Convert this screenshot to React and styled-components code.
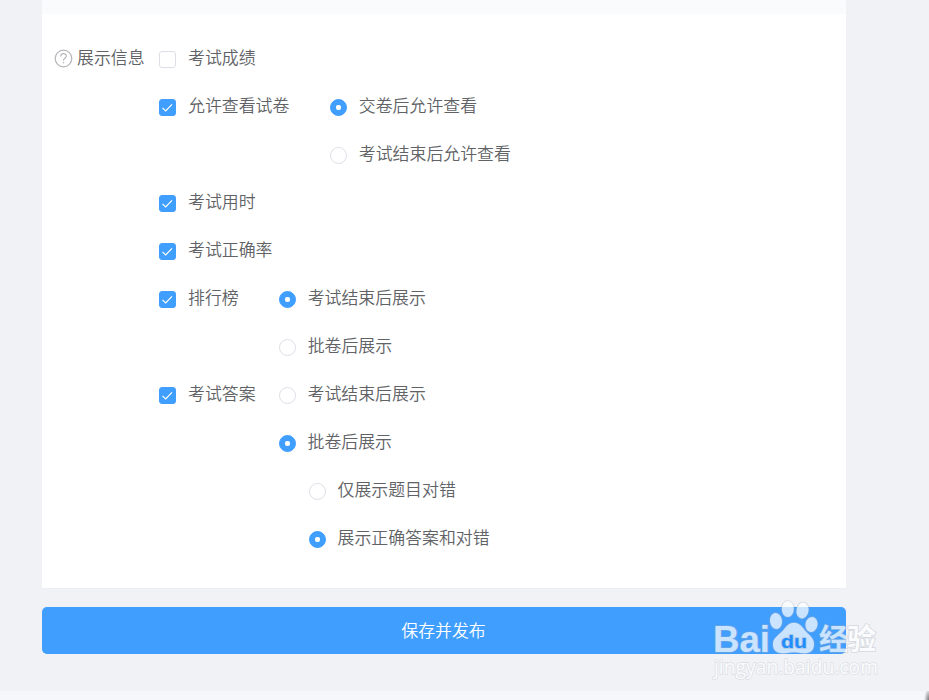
import React from 'react';
import styled, { createGlobalStyle, css } from 'styled-components';

const GlobalStyle = createGlobalStyle`
  * {
    box-sizing: border-box;
  }

  body {
    background: #f0f2f6;
    color: #606266;
    font-family: 'Noto Sans CJK SC', sans-serif;
    font-size: 16.9px;
    font-weight: 350;
    margin: 0;
    overflow: hidden;
  }
`;

const StyledPage = styled.div`
  display: flex;
  flex-direction: column;
  height: 700px;
  overflow: hidden;
  position: relative;
`;

const StyledCard = styled.section`
  background: #fff;
  border-bottom: 1px solid #ebeef5;
  height: 589px;
  margin: 0 83px 0 42px;
`;

const StyledCardHeader = styled.div`
  background: #f9fbfd;
  height: 14px;
`;

const StyledFormItem = styled.div`
  display: flex;
  padding: 20px 0 0 12px;
`;

const StyledLabel = styled.div`
  align-items: center;
  display: flex;
  gap: 4px;
  height: 48px;
  width: 105px;
`;

const StyledGroup = styled.div`
  display: flex;
  gap: ${props => props.$gap || 0}px;
`;

const StyledOption = styled.label`
  align-items: center;
  display: flex;
  gap: 12px;
  height: 48px;
  padding-left: ${props => (props.$nested ? 30 : 0)}px;
`;

const StyledText = styled.span`
  line-height: 24px;
  padding-bottom: 2px;
  white-space: nowrap;
`;

const controlStyle = css`
  align-items: center;
  background: ${props => (props.$checked ? '#409eff' : '#fff')};
  border: 1px solid ${props => (props.$checked ? '#409eff' : '#dcdfe6')};
  display: flex;
  flex: none;
  height: 17px;
  justify-content: center;
  margin-top: 3px;
  width: 17px;
`;

const StyledCheckbox = styled.span`
  ${controlStyle}
  border-radius: 3px;
`;

const StyledRadio = styled.span`
  ${controlStyle}
  border-radius: 50%;
`;

const StyledDot = styled.span`
  background: #fff;
  border-radius: 2px;
  height: 5px;
  width: 5px;
`;

const StyledButton = styled.button`
  background: #409eff;
  border: 0;
  border-radius: 5px;
  color: #fff;
  flex: none;
  font: inherit;
  height: 47px;
  margin: 18px 83px 0 42px;
  padding: 0 1px 2px 0;
`;

const StyledFooter = styled.footer`
  background: radial-gradient(ellipse 5px 12px at 100% 100%, #777, transparent) #f5f7fb;
  height: 9px;
  margin-top: auto;
`;

const StyledWatermark = styled.svg`
  left: 706px;
  position: absolute;
  top: 596px;
`;

const groups = [
  { text: '考试成绩' },
  {
    text: '允许查看试卷',
    checked: true,
    gap: 40.5,
    options: [
      { text: '交卷后允许查看', checked: true },
      { text: '考试结束后允许查看' }
    ]
  },
  { text: '考试用时', checked: true },
  { text: '考试正确率', checked: true },
  {
    text: '排行榜',
    checked: true,
    gap: 40,
    options: [
      { text: '考试结束后展示', checked: true },
      { text: '批卷后展示' }
    ]
  },
  {
    text: '考试答案',
    checked: true,
    gap: 23,
    options: [
      { text: '考试结束后展示' },
      { text: '批卷后展示', checked: true },
      { text: '仅展示题目对错', nested: true },
      { text: '展示正确答案和对错', nested: true, checked: true }
    ]
  }
];

const HelpIcon = () => (
  <svg width="19" height="19" viewBox="0 0 19 19" fill="none" stroke="#b4b6b9">
    <circle cx="9.5" cy="9.5" r="8.3" strokeWidth="1.2" />
    <path d="M6.7 7.5C6.7 3.8 12.3 3.9 12.3 7.1C12.3 9 9.5 9.2 9.5 11.7" strokeWidth="1.2" />
    <circle cx="9.5" cy="13.8" r=".8" fill="#b4b6b9" stroke="none" />
  </svg>
);

const Checkbox = ({ text, checked }) => (
  <StyledOption>
    <StyledCheckbox $checked={checked}>
      {checked && (
        <svg width="15" height="15" viewBox="0 0 15 15" fill="none" stroke="#fff">
          <path d="M2.5 7.8L5.7 11L12 4.3" strokeWidth="1.2" />
        </svg>
      )}
    </StyledCheckbox>
    <StyledText>{text}</StyledText>
  </StyledOption>
);

const Radio = ({ text, checked, nested }) => (
  <StyledOption $nested={nested}>
    <StyledRadio $checked={checked}>{checked && <StyledDot />}</StyledRadio>
    <StyledText>{text}</StyledText>
  </StyledOption>
);

const Watermark = () => (
  <StyledWatermark width="180" height="88" viewBox="0 0 180 88">
    <g
      fill="#fff"
      stroke="#aab0ba"
      strokeOpacity=".55"
      strokeWidth="1.6"
      paintOrder="stroke"
      opacity=".72"
      fontFamily="'Open Sans', sans-serif"
    >
      <text
        x="7"
        y="55.5"
        fontFamily="'Liberation Sans', sans-serif"
        fontSize="37"
        fontWeight="700"
        textLength="57"
        lengthAdjust="spacingAndGlyphs"
      >
        Bai
      </text>
      <ellipse cx="70" cy="25" rx="6" ry="8" transform="rotate(-8 70 25)" />
      <ellipse cx="81.8" cy="13" rx="6" ry="8" />
      <ellipse cx="96.5" cy="14.5" rx="6" ry="8" transform="rotate(10 96.5 14.5)" />
      <ellipse cx="105.5" cy="28.5" rx="6" ry="7.6" transform="rotate(10 105.5 28.5)" />
      <path d="M79 32C84 25 92 25 97 32C102 39 108 41 108 48C108 57 101 58 95 57C90 56 86 56 81 57C74 58 67 57 67 48C67 41 74 39 79 32Z" />
      <text
        x="75"
        y="52"
        fontFamily="'Liberation Sans', sans-serif"
        fontSize="19"
        fontWeight="700"
        fill="#1687ff"
        textLength="26"
        lengthAdjust="spacingAndGlyphs"
      >
        du
      </text>
      <text
        x="113"
        y="54"
        fontFamily="'Noto Sans CJK SC', sans-serif"
        fontSize="29"
        fontWeight="700"
        textLength="57"
      >
        经验
      </text>
      <text
        x="8"
        y="77.5"
        fontSize="19.5"
        fontWeight="500"
        strokeOpacity=".4"
        textLength="164"
        lengthAdjust="spacingAndGlyphs"
      >
        jingyan.baidu.com
      </text>
    </g>
  </StyledWatermark>
);

const App = () => (
  <>
    <GlobalStyle />
    <StyledPage>
      <StyledCard>
        <StyledCardHeader />
        <StyledFormItem>
          <StyledLabel>
            <HelpIcon />
            <StyledText>展示信息</StyledText>
          </StyledLabel>
          <div>
            {groups.map(({ text, checked, gap, options = [] }) => (
              <StyledGroup key={text} $gap={gap}>
                <Checkbox text={text} checked={checked} />
                <div>
                  {options.map(option => (
                    <Radio key={option.text} {...option} />
                  ))}
                </div>
              </StyledGroup>
            ))}
          </div>
        </StyledFormItem>
      </StyledCard>
      <StyledButton>保存并发布</StyledButton>
      <StyledFooter />
      <Watermark />
    </StyledPage>
  </>
);

export default App;
